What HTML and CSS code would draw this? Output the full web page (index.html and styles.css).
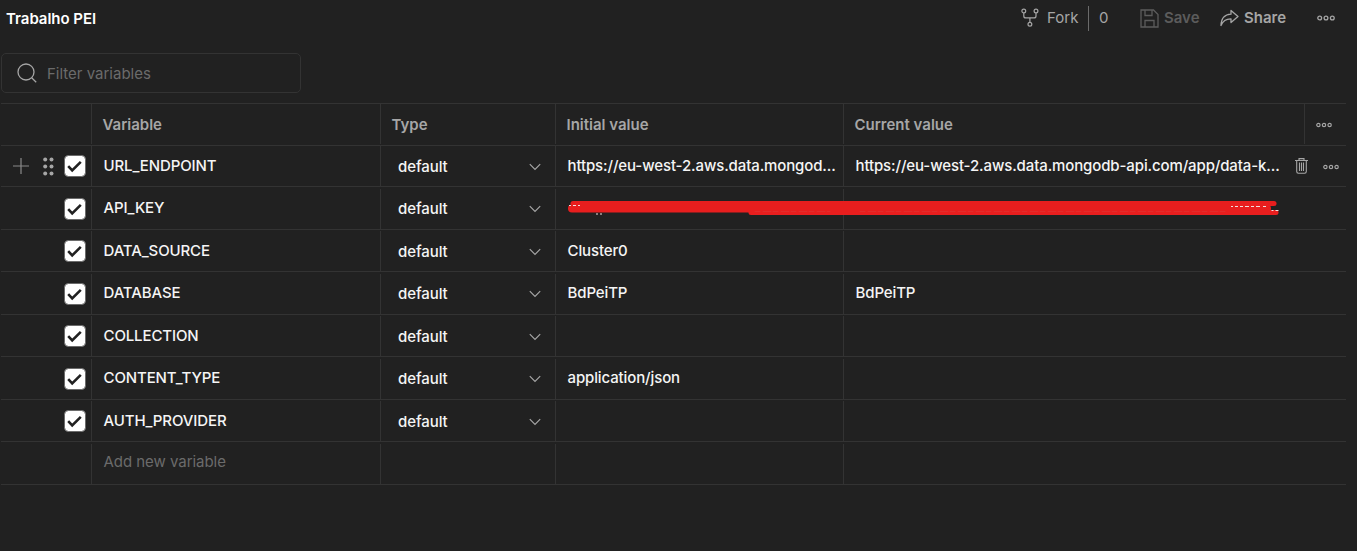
FILE: index.html
```html
<!DOCTYPE html>
<html lang="pt">
<head>
<meta charset="utf-8">
<title>Trabalho PEI</title>
<link rel="stylesheet" href="styles.css">
</head>
<body>
<svg class="defs" width="0" height="0">
  <symbol id="check" viewBox="0 0 22 22"><rect x=".5" y=".5" width="21" height="21" rx="4" fill="#fff" stroke="#6b6b6b"/><path d="M4.2 11.2l4 4.2 8.6-8.6" fill="none" stroke="#212121" stroke-width="2.6"/></symbol>
  <symbol id="chev" viewBox="0 0 12 8"><path d="M.8 1.2L6 6.4l5.2-5.2" fill="none" stroke="#a6a6a6" stroke-width="1.2"/></symbol>
  <symbol id="dots" viewBox="0 0 18 6"><g fill="none" stroke="currentColor" stroke-width="1.3"><circle cx="2.7" cy="3" r="1.9"/><circle cx="9" cy="3" r="1.9"/><circle cx="15.3" cy="3" r="1.9"/></g></symbol>
</svg>
<header class="topbar">
  <h1 class="title">Trabalho PEI</h1>
  <div class="actions">
    <svg class="fork-icon" width="18" height="20" viewBox="0 0 18 20" fill="none" stroke="#a6a6a6" stroke-width="1.2"><circle cx="2.8" cy="3" r="1.9"/><circle cx="15" cy="3" r="1.9"/><circle cx="8.9" cy="16.3" r="1.9"/><path d="M2.8 4.9v3q0 2 2 2H13q2 0 2-2v-3M8.9 9.9v4.5"/></svg>
    <span class="fork">Fork</span><i class="sep"></i><span class="count">0</span>
    <svg class="save-icon" width="19" height="19" viewBox="0 0 19 19" fill="none" stroke="#5c5c5c" stroke-width="1.3"><path d="M1 1h12.5L18 5.5V18H1zM5 1v5.5h7V1M5 18v-6.5h9V18"/></svg>
    <span class="save">Save</span>
    <svg class="share-icon" width="19" height="18" viewBox="0 0 19 18" fill="none" stroke="#a6a6a6" stroke-width="1.3" stroke-linejoin="round"><path d="M11 1.5l7 6-7 6v-3.7C6 9.700 3 11.500 1 16.500 1.200 9.500 5 5.500 11 5.200z"/></svg>
    <span class="share">Share</span>
    <svg class="more" width="18" height="6"><use href="#dots"/></svg>
  </div>
</header>
<div class="filter">
  <svg width="20" height="20" viewBox="0 0 20 20" fill="none" stroke="#a6a6a6" stroke-width="1.3"><circle cx="9" cy="9" r="8"/><path d="M14.700 14.700l4.500 4.500"/></svg>
  <span>Filter variables</span>
</div>
<main class="table">
  <div class="row head">
    <div class="cell"></div><div class="cell">Variable</div><div class="cell">Type</div><div class="cell">Initial value</div><div class="cell">Current value</div>
    <div class="cell tools"><svg width="16" height="6"><use href="#dots"/></svg></div>
  </div>
  <div class="row r41">
    <div class="cell ctl"><svg class="plus" width="16" height="16" viewBox="0 0 16 16" stroke="#8a8a8a" stroke-width="1.2"><path d="M8 0v16M0 8h16"/></svg><svg class="grip" width="11" height="19" viewBox="0 0 11 19" fill="#a6a6a6"><circle cx="2.200" cy="2.500" r="2"/><circle cx="8.500" cy="2.500" r="2"/><circle cx="2.200" cy="9.500" r="2"/><circle cx="8.500" cy="9.500" r="2"/><circle cx="2.200" cy="16.500" r="2"/><circle cx="8.500" cy="16.500" r="2"/></svg><svg class="box"><use href="#check"/></svg></div>
    <div class="cell">URL_ENDPOINT</div><div class="cell type"><span>default</span><svg><use href="#chev"/></svg></div>
    <div class="cell"><span class="url">https://eu-west-2.aws.data.mongod...</span></div>
    <div class="cell wide"><span class="url">https://eu-west-2.aws.data.mongodb-api.com/app/data-k...</span>
      <svg class="trash" width="13" height="16" viewBox="0 0 13 16" fill="none" stroke="#a6a6a6" stroke-width="1.100"><path d="M0 2.500h13M4 2V.6h5V2M1.700 3v10.500q0 1.700 1.700 1.700h6.200q1.700 0 1.700-1.700V3M4.500 4.500v8.500M6.500 4.500v8.500M8.500 4.500v8.500"/></svg>
      <svg class="rowmore" width="16" height="6"><use href="#dots"/></svg></div>
  </div>
  <div class="row r43 redacted">
    <div class="cell ctl"><svg class="box"><use href="#check"/></svg></div><div class="cell">API_KEY</div><div class="cell type"><span>default</span><svg><use href="#chev"/></svg></div><div class="cell"></div><div class="cell wide"></div>
    <svg class="scribble" width="712" height="20" viewBox="0 0 712 20" fill="none" stroke="#e81e1e" stroke-linecap="round" stroke-linejoin="round">
      <path d="M5 4.500H706" stroke-width="5"/><path d="M4 9.500H699" stroke-width="8"/><path d="M183 13.500H708" stroke-width="5"/>
      <path d="M1 6.500h2m2 0h3m2 0h2M28 15h2m2 0h2M663 7.500h2m2 0h3m2 0h3m2 0h4m2 0h3m2 0h4m3 0h3M703.500 11.500h2m2 0h3" stroke="#f3dede" stroke-width="1" stroke-linecap="butt"/>
      <path d="M187 12.500h75M292 12.500h365" stroke="#d94141" stroke-width=".4" stroke-dasharray="5 3 8 2"/>
    </svg>
  </div>
  <div class="row r42"><div class="cell ctl"><svg class="box"><use href="#check"/></svg></div><div class="cell">DATA_SOURCE</div><div class="cell type"><span>default</span><svg><use href="#chev"/></svg></div><div class="cell">Cluster0</div><div class="cell wide"></div></div>
  <div class="row r43"><div class="cell ctl"><svg class="box"><use href="#check"/></svg></div><div class="cell">DATABASE</div><div class="cell type"><span>default</span><svg><use href="#chev"/></svg></div><div class="cell">BdPeiTP</div><div class="cell wide">BdPeiTP</div></div>
  <div class="row r42"><div class="cell ctl"><svg class="box"><use href="#check"/></svg></div><div class="cell">COLLECTION</div><div class="cell type"><span>default</span><svg><use href="#chev"/></svg></div><div class="cell"></div><div class="cell wide"></div></div>
  <div class="row r43"><div class="cell ctl"><svg class="box"><use href="#check"/></svg></div><div class="cell">CONTENT_TYPE</div><div class="cell type"><span>default</span><svg><use href="#chev"/></svg></div><div class="cell">application/json</div><div class="cell wide"></div></div>
  <div class="row r42"><div class="cell ctl"><svg class="box"><use href="#check"/></svg></div><div class="cell">AUTH_PROVIDER</div><div class="cell type"><span>default</span><svg><use href="#chev"/></svg></div><div class="cell"></div><div class="cell wide"></div></div>
  <div class="row r43 add"><div class="cell"></div><div class="cell">Add new variable</div><div class="cell"></div><div class="cell"></div><div class="cell wide"></div></div>
</main>
</body>
</html>
```
FILE: styles.css
```css
* { box-sizing: border-box; }
body { margin: 0; height: 551px; overflow: hidden; background: #212121; color: #f5f5f5; font: 500 15px/20px Inter, "Liberation Sans", sans-serif; }
svg { display: block; flex: none; }
.defs { position: absolute; }
.topbar { display: flex; justify-content: space-between; height: 53px; padding: 5px 22px 0 6px; }
.title { margin: 3px 0 0; font-size: 15px; font-weight: 600; line-height: 21px; color: #fff; letter-spacing: -.03px; }
.actions { display: flex; align-items: center; height: 26px; color: #a6a6a6; }
.fork { width: 34px; margin-left: 8px; font-weight: 400; }
.sep { width: 1px; height: 25px; margin-left: 7px; background: #6b6b6b; }
.count { width: 12px; margin-left: 10px; font-weight: 400; }
.save-icon { margin-left: 29px; }
.save { width: 37px; margin-left: 5px; font-weight: 600; color: #5c5c5c; }
.share-icon { margin-left: 19px; }
.share { width: 44px; margin-left: 5px; font-weight: 600; }
.more { margin-left: 29px; }
.filter { display: flex; align-items: center; gap: 10px; width: 300px; height: 40px; margin-left: 1px; padding-left: 15px; border: 1px solid #333; border-radius: 5px; color: #6b6b6b; font-weight: 400; }
.filter span { padding-top: 2px; }
.table { width: 1345px; margin: 10px 0 0 1px; border-top: 1px solid #333; }
.row { display: grid; grid-template-columns: 90px 289px 175px 288px 1fr; border-bottom: 1px solid #333; }
.head { grid-template-columns: 90px 289px 175px 288px 461px 1fr; height: 42px; padding-bottom: 1px; color: #a6a6a6; font-weight: 600; }
.r41 { height: 41px; }
.r42 { height: 42px; padding-top: 1px; }
.r43 { height: 43px; padding-top: 2px; }
.cell { display: flex; align-items: center; min-width: 0; border-left: 1px solid #333; white-space: nowrap; }
.cell:first-child { border-left: 0; }
.row:not(.head) .cell { padding-left: 11.5px; padding-bottom: 1px; letter-spacing: -.12px; }
.row.r43:not(.head) .cell { padding-bottom: 2px; }
.head .cell { padding: 2px 0 0 10.5px; }
.row:not(.head) .ctl { justify-content: flex-end; padding: 0 5px 0 0; }
.row.r43:not(.head) .ctl { padding: 0 5px 1px 0; }
.box { width: 22px; height: 22px; }
.plus { margin-right: 14px; }
.grip { margin-right: 10px; }
.row:not(.head) .type { justify-content: space-between; padding: 1px 14px 0 17px; letter-spacing: -.08px; }
.row.r43:not(.head) .type { padding-bottom: 1px; }
.type svg { width: 12px; height: 8px; }
.wide .url { width: 426px; }
.trash { margin: 1px 0 0 13.5px; color: #a6a6a6; }
.rowmore { margin: 2px 0 0 15px; color: #a6a6a6; }
.head .tools { padding: 1px 0 0 11px; }
.redacted { position: relative; }
.scribble { position: absolute; left: 567px; top: 12px; }
.add { color: #6b6b6b; font-weight: 400; }
.row.r43.add:not(.head) .cell { padding-bottom: 4px; letter-spacing: -.04px; }
```
